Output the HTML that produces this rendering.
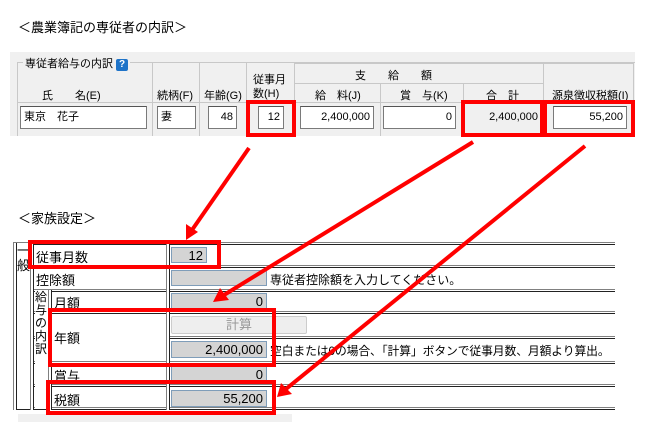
<!DOCTYPE html>
<html><head><meta charset="utf-8"><style>
*{margin:0;padding:0;box-sizing:border-box}
body{width:645px;height:442px;background:#fff;position:relative;overflow:hidden;font-family:"Liberation Sans","Noto Sans CJK JP",sans-serif;color:#000}
.a{position:absolute}
.t{font-size:11px;white-space:nowrap}
.in{position:absolute;background:#fff;border:1px solid #7a7a7a;border-top-color:#555;font-size:11px;line-height:20px;padding:0 3px;white-space:nowrap}
.vl{position:absolute;width:1px;background:#c8c8c8}
.hl{position:absolute;height:1px;background:#c8c8c8}
.rb{position:absolute;border:4px solid #f00}
.g{position:absolute;background:#d4d4d4;border:1px solid #7f9db9;font-size:13px;text-align:right;padding-right:3px;line-height:16px}
.dl{position:absolute;left:13px;width:602px;height:3px;border-top:1px solid #808080;border-bottom:1px solid #222}
.lb{position:absolute;font-size:13px;white-space:nowrap}
.vb{position:absolute;width:4px;border-left:1px solid #808080;border-right:1px solid #222;background:#fff}
</style></head><body>
<div class="a" style="left:18px;top:17px;font-size:13px">＜農業簿記の専従者の内訳＞</div>
<div class="a" style="left:10px;top:52px;width:625px;height:84px;background:#f0f0f0"></div>
<div class="a" style="left:17px;top:62px;width:618px;height:74px;border-left:1px solid #c8c8c8;border-top:1px solid #c8c8c8"></div>
<div class="a t" style="left:23px;top:55px;background:#f0f0f0;padding:0 2px">専従者給与の内訳 <span style="display:inline-block;width:12px;height:12px;background:#1e73c8;color:#fff;font-weight:bold;font-size:10px;text-align:center;line-height:12px;border-radius:2px">?</span></div>
<div class="vl" style="left:152px;top:62px;height:74px"></div>
<div class="vl" style="left:199px;top:62px;height:74px"></div>
<div class="vl" style="left:246px;top:62px;height:74px"></div>
<div class="vl" style="left:294px;top:63px;height:73px"></div>
<div class="vl" style="left:380px;top:83px;height:53px"></div>
<div class="vl" style="left:463px;top:83px;height:53px"></div>
<div class="vl" style="left:543px;top:63px;height:73px"></div>
<div class="hl" style="left:294px;top:63px;width:340px"></div>
<div class="vl" style="left:633px;top:63px;height:73px"></div>
<div class="hl" style="left:294px;top:83px;width:249px"></div>
<div class="hl" style="left:17px;top:102px;width:617px"></div>
<div class="a t" style="left:42px;top:87px">氏　　名(E)</div>
<div class="a t" style="left:157px;top:87px">続柄(F)</div>
<div class="a t" style="left:204px;top:87px">年齢(G)</div>
<div class="a t" style="left:253px;top:73px;line-height:14px">従事月<br>数(H)</div>
<div class="a t" style="left:355px;top:67px">支　　給　　額</div>
<div class="a t" style="left:315px;top:87px">給　料(J)</div>
<div class="a t" style="left:400px;top:87px">賞　与(K)</div>
<div class="a t" style="left:486px;top:87px">合　計</div>
<div class="a t" style="left:552px;top:87px">源泉徴収税額(I)</div>
<div class="in" style="left:20px;top:106px;width:127px;height:23px">東京　花子</div>
<div class="in" style="left:157px;top:106px;width:39px;height:23px">妻</div>
<div class="in" style="left:208px;top:106px;width:29px;height:23px;text-align:right">48</div>
<div class="in" style="left:258px;top:106px;width:26px;height:23px;text-align:right">12</div>
<div class="in" style="left:300px;top:106px;width:74px;height:23px;text-align:right">2,400,000</div>
<div class="in" style="left:383px;top:106px;width:73px;height:23px;text-align:right">0</div>
<div class="a t" style="left:470px;top:111px;width:68px;text-align:right">2,400,000</div>
<div class="in" style="left:553px;top:106px;width:74px;height:23px;text-align:right">55,200</div>
<div class="rb" style="left:246px;top:100px;width:50px;height:37px"></div>
<div class="rb" style="left:461px;top:100px;width:83px;height:37px"></div>
<div class="rb" style="left:543px;top:100px;width:92px;height:37px"></div>

<div class="a" style="left:18px;top:208px;font-size:13px">＜家族設定＞</div>
<div class="dl" style="top:242px"></div>
<div class="dl" style="top:265px"></div>
<div class="dl" style="top:289px"></div>
<div class="dl" style="top:311px"></div>
<div class="dl" style="top:336px"></div>
<div class="dl" style="top:361px"></div>
<div class="dl" style="top:384px"></div>
<div class="dl" style="top:407px"></div>
<div class="vb" style="left:13px;top:243px;height:167px"></div>
<div class="vb" style="left:30px;top:244px;height:166px"></div>
<div class="a" style="left:17px;top:244px;width:13px;height:164px;background:#fff"></div>
<div class="lb" style="left:17px;top:243px;line-height:15px">一<br>般</div>
<div class="vb" style="left:48px;top:290px;height:120px"></div>
<div class="a" style="left:35px;top:291px;width:13px;height:117px;background:#fff"></div>
<div class="lb" style="left:35px;top:291px;line-height:13px;font-size:12px">給<br>与<br>の<br>内<br>訳</div>
<div class="vb" style="left:166px;top:243px;height:167px"></div>
<div class="a" style="left:35px;top:246px;width:131px;height:19px;background:#fff"></div>
<div class="lb" style="left:36px;top:247px">従事月数</div>
<div class="lb" style="left:36px;top:270px">控除額</div>
<div class="lb" style="left:54px;top:293px">月額</div>
<div class="a" style="left:52px;top:314px;width:114px;height:46px;background:#fff"></div>
<div class="lb" style="left:54px;top:328px">年額</div>
<div class="lb" style="left:54px;top:366px">賞与</div>
<div class="lb" style="left:54px;top:390px">税額</div>
<div class="g" style="left:171px;top:247px;width:36px;height:16px">12</div>
<div class="g" style="left:171px;top:270px;width:96px;height:16px"></div>
<div class="lb" style="left:270px;top:271px;font-size:12px">専従者控除額を入力してください。</div>
<div class="g" style="left:171px;top:293px;width:96px;height:16px">0</div>
<div class="a" style="left:171px;top:316px;width:136px;height:18px;background:#eee;border:1px solid #ccc;border-radius:2px;color:#999;font-size:13px;text-align:center;line-height:16px">計算</div>
<div class="g" style="left:171px;top:341px;width:96px;height:17px">2,400,000</div>
<div class="lb" style="left:270px;top:342px;font-size:11.8px;letter-spacing:-0.1px">空白または0の場合、「計算」ボタンで従事月数、月額より算出。</div>
<div class="g" style="left:171px;top:366px;width:96px;height:16px">0</div>
<div class="g" style="left:171px;top:390px;width:96px;height:17px">55,200</div>
<div class="a" style="left:18px;top:414px;width:274px;height:8px;background:#f0f0f0"></div>
<div class="rb" style="left:28px;top:240px;width:193px;height:29px"></div>
<div class="rb" style="left:48px;top:308px;width:228px;height:59px"></div>
<div class="rb" style="left:46px;top:380px;width:230px;height:35px"></div>
<svg class="a" style="left:0;top:0" width="645" height="442">
<g stroke="#f00" stroke-width="4" fill="#f00">
<line x1="249" y1="148" x2="192" y2="230"/>
<line x1="473" y1="142" x2="224" y2="295"/>
<line x1="585" y1="146" x2="286" y2="389"/>
</g>
<g fill="#f00">
<polygon points="186,240 186,224 198,232"/>
<polygon points="213,302 220,288 229,300"/>
<polygon points="277,397 281,383 292,394"/>
</g>
</svg>
</body></html>
